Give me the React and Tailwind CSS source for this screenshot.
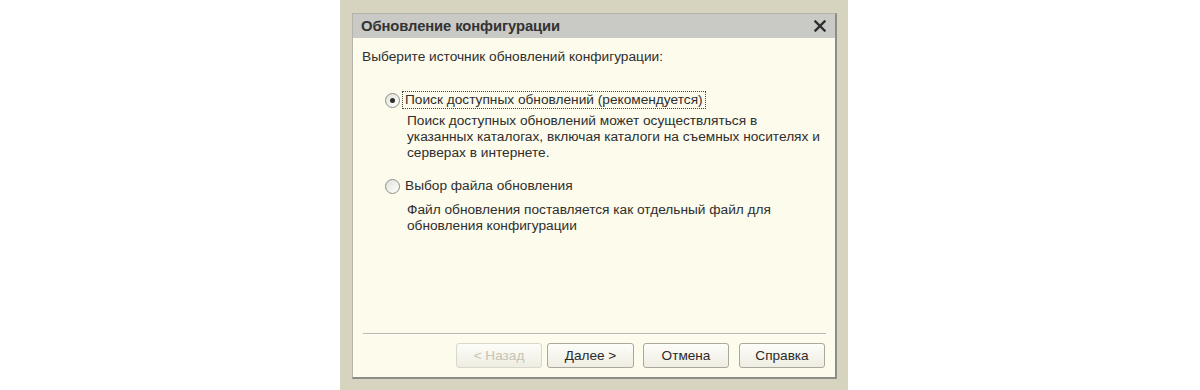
const font = { fontFamily: '"Liberation Sans", Arial, sans-serif' };

const Radio = ({ checked }) => (
    <span className="relative w-[15px] h-[15px] rounded-full border border-[#8e8e86] bg-gradient-to-br from-[#e2e2da] to-white shrink-0 flex items-center justify-center">
        {checked && <span className="w-[5px] h-[5px] rounded-full bg-[#2e2e2e]" />}
    </span>
);

const Button = ({ children, disabled, className = '' }) => (
    <button
        className={`h-[25px] w-[86px] rounded-[3px] border text-[13.6px] flex items-center justify-center bg-gradient-to-b from-[#fdfdf9] to-[#efede2] ${
            disabled ? 'border-[#d9d8cc] text-[#c4c3b4]' : 'border-[#a9a89c] text-[#2a2a2a]'
        } ${className}`}
    >
        {children}
    </button>
);

const App = () => {
    return (
        <div className="w-[1200px] h-[390px] bg-white flex" style={font}>
            {/* khaki frame */}
            <div className="ml-[340px] w-[508px] h-[390px] bg-[#d6d4bf] pl-[12px] pt-[13px]">
                {/* DIALOG */}
                <div className="w-[485px] h-[366px] flex flex-col bg-[#fcfbec] border-l border-t border-[#b4b3a8] border-r-2 border-b-2 border-r-[#8c8c88] border-b-[#8c8c88] shadow-[inset_1px_1px_0_#ffffff]">
                    {/* TITLE BAR */}
                    <div className="h-[24px] bg-[#c9c9c6] flex items-center justify-between pl-[8px] pr-[9px] shrink-0">
                        <span className="text-[14.8px] font-bold text-[#333333] tracking-[-0.1px]">Обновление конфигурации</span>
                        <svg width="12" height="12" viewBox="0 0 12 12">
                            <path d="M1.5 1.5 L10.5 10.5 M10.5 1.5 L1.5 10.5" stroke="#2f2f2f" strokeWidth="2.4" strokeLinecap="square" />
                        </svg>
                    </div>

                    {/* BODY */}
                    <div className="flex-1 flex flex-col pl-[9px] pt-[11px] text-[13.7px] leading-[16px] text-[#2e2e2e]">
                        <div>Выберите источник обновлений конфигурации:</div>

                        <div className="mt-[26px] ml-[23px] flex items-center h-[18px]">
                            <Radio checked />
                            <span className="ml-[2px] px-[2px] h-[18px] flex items-center border border-dotted border-[#444]">
                                Поиск доступных обновлений (рекомендуется)
                            </span>
                        </div>
                        <div className="mt-[4px] ml-[45px] w-[430px]">
                            Поиск доступных обновлений может осуществляться в<br />
                            указанных каталогах, включая каталоги на съемных носителях и<br />
                            серверах в интернете.
                        </div>

                        <div className="mt-[16px] ml-[23px] flex items-center h-[18px]">
                            <Radio />
                            <span className="ml-[3px] px-[2px] h-[18px] flex items-center">Выбор файла обновления</span>
                        </div>
                        <div className="mt-[7px] ml-[45px] w-[430px]">
                            Файл обновления поставляется как отдельный файл для<br />
                            обновления конфигурации
                        </div>

                        <div className="flex-1" />

                        {/* separator */}
                        <div className="mr-[9px] ml-[1px] h-[2px] border-t border-[#b8b7aa] border-b border-b-white" />

                        {/* BUTTONS */}
                        <div className="flex justify-end pr-[10px] mt-[8px] mb-[9px]">
                            <Button disabled>&lt; Назад</Button>
                            <Button className="ml-[5px] w-[87px]">Далее &gt;</Button>
                            <Button className="ml-[9px]">Отмена</Button>
                            <Button className="ml-[10px]">Справка</Button>
                        </div>
                    </div>
                </div>
            </div>
        </div>
    );
};

export default App;
